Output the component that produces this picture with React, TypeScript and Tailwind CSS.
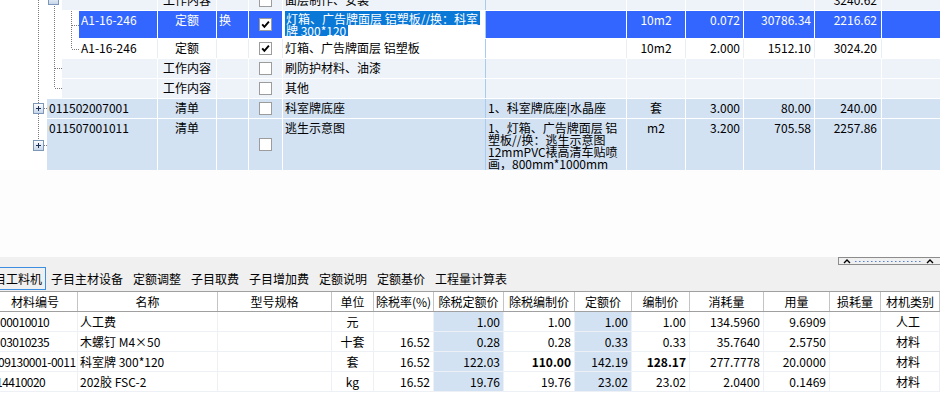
import React from "react";

type Tone = "sel" | "white" | "light" | "qd";

const toneBg: Record<Tone, string> = {
  sel: "bg-[#3366ff] text-white",
  white: "bg-white text-black",
  light: "bg-[#eef3f9] text-black",
  qd: "bg-[#d3e2f3] text-black",
};

const toneLine: Record<Tone, string> = {
  sel: "border-white",
  white: "border-[#e9eef5]",
  light: "border-white",
  qd: "border-white",
};

const Check = ({ checked }: { checked?: boolean }) => (
  <div className="w-[13px] h-[13px] border border-[#9c9c9c] bg-white flex items-center justify-center">
    {checked && (
      <svg width="9" height="9" viewBox="0 0 9 9">
        <path d="M1.2 4.3 L3.4 6.8 L7.9 1.6" stroke="#000" strokeWidth="1.9" fill="none" />
      </svg>
    )}
  </div>
);

type TopRowProps = {
  tone: Tone;
  spacer: string;
  codeW: string;
  h: string;
  code?: string;
  kind?: string;
  swap?: string;
  checked?: boolean;
  name?: React.ReactNode;
  nameBg?: string;
  feature?: React.ReactNode;
  unit?: string;
  qty?: string;
  price?: string;
  total?: string;
};

const TopRow = (p: TopRowProps) => {
  const line = toneLine[p.tone];
  const cell = `border-r ${line} overflow-hidden whitespace-nowrap pt-[3px] leading-[12px] shrink-0`;
  return (
    <div className={`flex ${p.h}`}>
      <div className={`${p.spacer} shrink-0`} />
      <div className={`flex flex-1 ${toneBg[p.tone]}`}>
        <div className={`${cell} ${p.codeW} pl-[2px]`}>{p.code}</div>
        <div className={`${cell} w-[59px] text-center`}>{p.kind}</div>
        <div className={`${cell} w-[32px] pl-[2px]`}>{p.swap}</div>
        <div className={`border-r ${line} w-[34px] shrink-0 flex items-center justify-center`}>
          <Check checked={p.checked} />
        </div>
        <div className={`${cell} w-[203px] pl-[2px] !border-[#a8ccf0] ${p.nameBg ?? ""}`}>{p.name}</div>
        <div className={`${cell} w-[141px] pl-[2px]`}>{p.feature}</div>
        <div className={`${cell} w-[59px] text-center`}>{p.unit}</div>
        <div className={`${cell} w-[58px] text-right pr-[3px]`}>{p.qty}</div>
        <div className={`${cell} w-[71px] text-right pr-[3px]`}>{p.price}</div>
        <div className={`${cell} w-[67px] text-right pr-[4px]`}>{p.total}</div>
        <div className="flex-1" />
      </div>
    </div>
  );
};

const TreeBox = ({ x, y, plus }: { x: number; y: number; plus?: boolean }) => (
  <g>
    <rect x={x + 0.5} y={y + 0.5} width="10" height="10" fill="url(#tb)" stroke="#7d97b8" />
    <path d={`M${x + 3} ${y + 5.5} H${x + 8}`} stroke="#1c2f55" strokeWidth="1" />
    {plus && <path d={`M${x + 5.5} ${y + 3} V${y + 8}`} stroke="#1c2f55" strokeWidth="1" />}
  </g>
);

const TreeLines = () => (
  <svg className="absolute left-0 top-0 pointer-events-none" width="80" height="170">
    <defs>
      <linearGradient id="tb" x1="0" y1="0" x2="0" y2="1">
        <stop offset="0" stopColor="#ffffff" />
        <stop offset="1" stopColor="#c4d4ea" />
      </linearGradient>
    </defs>
    <g stroke="#7a7a7a" strokeDasharray="1 1" fill="none">
      <path d="M38.5 0 V146" />
      <path d="M44 108.5 H47" />
      <path d="M44 145.5 H47" />
      <path d="M54.5 4 V88" />
      <path d="M55 68.5 H62" />
      <path d="M55 88.5 H62" />
      <path d="M71.5 11 V49" />
      <path d="M72 25.5 H79" />
      <path d="M72 49.5 H79" />
    </g>
    <TreeBox x={48} y={-6} />
    <TreeBox x={33} y={103} plus />
    <TreeBox x={33} y={140} plus />
  </svg>
);

const tabs = ["子目工料机", "子目主材设备", "定额调整", "子目取费", "子目增加费", "定额说明", "定额基价", "工程量计算表"];

const cols = [
  { w: "w-[78px]", h: "材料编号", a: "text-left tracking-[-0.5px]", hp: "pr-[7px]" },
  { w: "w-[140px]", h: "名称", a: "text-left pl-[2px]", hp: "" },
  { w: "w-[114px]", h: "型号规格", a: "text-left", hp: "" },
  { w: "w-[42px]", h: "单位", a: "text-center", hp: "" },
  { w: "w-[60px]", h: "除税率(%)", a: "text-right pr-[3px]", hp: "" },
  { w: "w-[70px]", h: "除税定额价", a: "text-right pr-[3px] bg-[#d3e2f3]", hp: "" },
  { w: "w-[71px]", h: "除税编制价", a: "text-right pr-[3px]", hp: "" },
  { w: "w-[57px]", h: "定额价", a: "text-right pr-[3px] bg-[#d3e2f3]", hp: "" },
  { w: "w-[58px]", h: "编制价", a: "text-right pr-[3px]", hp: "" },
  { w: "w-[74px]", h: "消耗量", a: "text-right pr-[3px]", hp: "" },
  { w: "w-[66px]", h: "用量", a: "text-right pr-[3px]", hp: "" },
  { w: "w-[51px]", h: "损耗量", a: "text-right", hp: "" },
  { w: "flex-1", h: "材机类别", a: "text-center pr-[4px]", hp: "" },
];

const rows: { cells: string[]; bold?: number[]; codeShift?: string }[] = [
  { cells: ["00010010", "人工费", "", "元", "", "1.00", "1.00", "1.00", "1.00", "134.5960", "9.6909", "", "人工"] },
  { cells: ["03010235", "木螺钉 M4×50", "", "十套", "16.52", "0.28", "0.28", "0.33", "0.33", "35.7640", "2.5750", "", "材料"] },
  {
    cells: ["09130001-0011", "科室牌 300*120", "", "套", "16.52", "122.03", "110.00", "142.19", "128.17", "277.7778", "20.0000", "", "材料"],
    bold: [6, 8],
    codeShift: "-ml-[2px]",
  },
  {
    cells: ["14410020", "202胶 FSC-2", "", "kg", "16.52", "19.76", "19.76", "23.02", "23.02", "2.0400", "0.1469", "", "材料"],
    codeShift: "-ml-[4px]",
  },
];

export default function App() {
  return (
    <div className="w-[940px] h-[418px] overflow-hidden bg-white text-[12px] text-black font-['Noto_Sans_CJK_SC','Noto_Sans',sans-serif]">
      {/* upper grid */}
      <div className="relative h-[170px] overflow-hidden">
        <div className="flex flex-col gap-px -mt-[9px]">
          <TopRow tone="light" spacer="w-[62px]" codeW="w-[96px]" h="h-[19px]" kind="工作内容" name="面层制作、安装" total="3240.62" />
          <TopRow
            tone="sel"
            spacer="w-[79px]"
            codeW="w-[79px]"
            h="h-[27px]"
            code="A1-16-246"
            kind="定额"
            swap="换"
            checked
            nameBg="bg-white"
            name={
              <div className="flex flex-col items-start -mt-[3px]">
                <span className="bg-[#0a78d7] text-white pl-[1px] pr-[2px] h-[14px] leading-[16px]">灯箱、广告牌面层 铝塑板//换：科室</span>
                <span className="bg-[#0a78d7] text-white pl-[1px] pr-[2px] h-[11px] leading-[11px]">牌 300*120</span>
              </div>
            }
            unit="10m2"
            qty="0.072"
            price="30786.34"
            total="2216.62"
          />
          <TopRow
            tone="white"
            spacer="w-[79px]"
            codeW="w-[79px]"
            h="h-[19px]"
            code="A1-16-246"
            kind="定额"
            checked
            name="灯箱、广告牌面层 铝塑板"
            unit="10m2"
            qty="2.000"
            price="1512.10"
            total="3024.20"
          />
          <TopRow tone="light" spacer="w-[62px]" codeW="w-[96px]" h="h-[19px]" kind="工作内容" name="刷防护材料、油漆" />
          <TopRow tone="light" spacer="w-[62px]" codeW="w-[96px]" h="h-[19px]" kind="工作内容" name="其他" />
          <TopRow
            tone="qd"
            spacer="w-[47px]"
            codeW="w-[111px]"
            h="h-[19px]"
            code="011502007001"
            kind="清单"
            name="科室牌底座"
            feature="1、科室牌底座|水晶座"
            unit="套"
            qty="3.000"
            price="80.00"
            total="240.00"
          />
          <TopRow
            tone="qd"
            spacer="w-[47px]"
            codeW="w-[111px]"
            h="h-[51px]"
            code="011507001011"
            kind="清单"
            name="逃生示意图"
            feature={
              <div className="flex flex-col">
                <span>1、灯箱、广告牌面层 铝</span>
                <span>塑板//换：逃生示意图</span>
                <span>12mmPVC裱高清车贴喷</span>
                <span>画，800mm*1000mm</span>
              </div>
            }
            unit="m2"
            qty="3.200"
            price="705.58"
            total="2257.86"
          />
        </div>
        <TreeLines />
      </div>

      <div className="h-[87px] bg-[#fdfdfd]" />

      {/* tab strip */}
      <div className="h-[34px] bg-[#f0f0f0] flex flex-col">
        <div className="h-[8px] flex justify-end">
          <svg width="102" height="8">
            <rect x="0.5" y="0.5" width="104" height="7" fill="#f0f0f0" stroke="#8c8c8c" />
            <path d="M6 6 L9 3 L12 6" stroke="#000" strokeWidth="1.4" fill="none" />
            <path d="M89 6 L92 3 L95 6" stroke="#000" strokeWidth="1.4" fill="none" />
            <path d="M17 4.5 H84" stroke="#4f7fd6" strokeWidth="1.2" strokeDasharray="1.5 2.5" />
          </svg>
        </div>
        <div className="mt-[2px] h-[23px] flex items-stretch -ml-[22px]">
          {tabs.map((t, i) => (
            <div
              key={t}
              className={`flex items-center border whitespace-nowrap ${
                i === 0 ? "border-[#3c8ee0] px-[3px]" : "border-transparent px-[4px]"
              }`}
            >
              {t}
            </div>
          ))}
        </div>
      </div>

      {/* lower grid header */}
      <div className="flex h-[21px] border-t border-b border-[#a0a0a0] bg-white">
        {cols.map((c) => (
          <div
            key={c.h}
            className={`${c.w} shrink-0 border-r border-[#c4c4c4] text-center leading-[19px] whitespace-nowrap overflow-hidden ${c.hp}`}
          >
            {c.h}
          </div>
        ))}
      </div>

      {rows.map((r, ri) => (
        <div key={ri} className="flex h-[20px] border-b border-[#edf1f6]">
          {r.cells.map((v, ci) => (
            <div
              key={ci}
              className={`${cols[ci].w} shrink-0 border-r border-[#edf1f6] leading-[19px] whitespace-nowrap overflow-hidden ${cols[ci].a} ${
                r.bold?.includes(ci) ? "font-bold" : ""
              }`}
            >
              <span className={ci === 0 ? r.codeShift ?? "" : ""}>{v}</span>
            </div>
          ))}
        </div>
      ))}
    </div>
  );
}
